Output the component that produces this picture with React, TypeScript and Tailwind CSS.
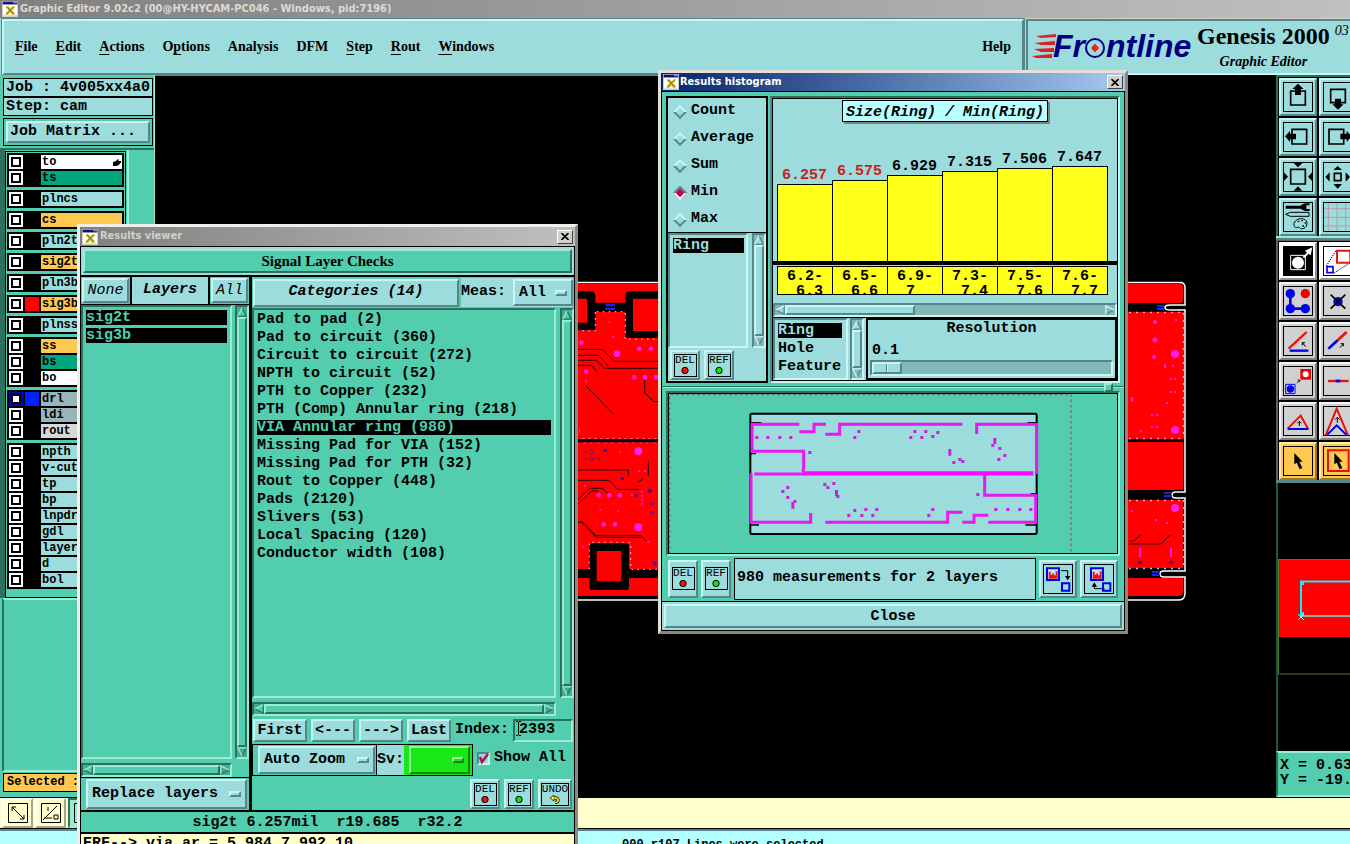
import { useState } from "react";
import type { ReactNode } from "react";
import clsx from "clsx";

// Motif style bevels
const RAISED_AQUA =
  "border-2 border-t-[#c8f6f4] border-l-[#c8f6f4] border-r-[#56868a] border-b-[#56868a] bg-[#9cdcdc]";
const SUNKEN_AQUA =
  "border-2 border-t-[#56868a] border-l-[#56868a] border-r-[#c8f6f4] border-b-[#c8f6f4] bg-[#9cdcdc]";
const RAISED_GREEN =
  "border-2 border-t-[#9cecd4] border-l-[#9cecd4] border-r-[#2c705e] border-b-[#2c705e] bg-[#52ceae]";
const SUNKEN_GREEN =
  "border-2 border-t-[#2c705e] border-l-[#2c705e] border-r-[#9cecd4] border-b-[#9cecd4] bg-[#52ceae]";

interface Layer {
  name: string;
  color: string;
  swatch?: string;
  selected?: boolean;
  work?: boolean;
}

const AQUA = "bg-[#9cdcdc]";
const ORANGE = "bg-[#ffc850]";
const GREEN = "bg-[#00a67c]";
const STEEL = "bg-[#9ab4bc]";

const LAYER_GROUPS: Layer[][] = [
  [{ name: "to", color: "bg-white", work: true }, { name: "ts", color: GREEN }],
  [{ name: "plncs", color: AQUA }],
  [{ name: "cs", color: ORANGE }],
  [{ name: "pln2t", color: AQUA }],
  [{ name: "sig2t", color: ORANGE }],
  [{ name: "pln3b", color: AQUA }],
  [{ name: "sig3b", color: ORANGE, swatch: "bg-[#ff0000]" }],
  [{ name: "plnss", color: AQUA }],
  [{ name: "ss", color: ORANGE }, { name: "bs", color: GREEN }, { name: "bo", color: "bg-white" }],
  [
    { name: "drl", color: STEEL, swatch: "bg-[#0020ff]", selected: true },
    { name: "ldi", color: STEEL },
    { name: "rout", color: "bg-[#d8d8d8]" },
  ],
  ["npth", "v-cut", "tp", "bp", "lnpdr", "gdl", "layer", "d", "bol"].map((name) => ({ name, color: AQUA })),
];

const MENUS = [
  ["", "F", "ile"],
  ["", "E", "dit"],
  ["", "A", "ctions"],
  ["O", "p", "tions"],
  ["Analysis", "", ""],
  ["DFM", "", ""],
  ["", "S", "tep"],
  ["", "R", "out"],
  ["", "W", "indows"],
];

const CATEGORIES = [
  "Pad to pad (2)",
  "Pad to circuit (360)",
  "Circuit to circuit (272)",
  "NPTH to circuit (52)",
  "PTH to Copper (232)",
  "PTH (Comp) Annular ring (218)",
  "VIA Annular ring (980)",
  "Missing Pad for VIA (152)",
  "Missing Pad for PTH (32)",
  "Rout to Copper (448)",
  "Pads (2120)",
  "Slivers (53)",
  "Local Spacing (120)",
  "Conductor width (108)",
];

const BARS = [
  { value: "6.257", height: 77, from: "6.2-", to: "6.3", alert: true },
  { value: "6.575", height: 81, from: "6.5-", to: "6.6", alert: true },
  { value: "6.929", height: 86, from: "6.9-", to: "7", alert: false },
  { value: "7.315", height: 90, from: "7.3-", to: "7.4", alert: false },
  { value: "7.506", height: 93, from: "7.5-", to: "7.6", alert: false },
  { value: "7.647", height: 95, from: "7.6-", to: "7.7", alert: false },
];

function AppIcon() {
  return (
    <svg viewBox="0 0 48 48" className="h-4 w-4 shrink-0" aria-hidden="true">
      <path d="M0 0h48v48H0z" fill="#d4d0c8" />
      <path d="M2 2h44v8H2z" fill="#10107c" />
      <path d="M34 3h4v4h-4zM40 3h4v4h-4z" fill="#d4d0c8" />
      <path d="M3 12h42v31H3z" fill="#fff" />
      <path d="M12 16h8l6 7 6-7h6v4l-8 8 8 8v5h-8l-5-7-7 7h-7v-4l9-9-8-8z" fill="#c8b400" />
      <path d="M15 18l20 20M34 18L14 38" stroke="#6c6410" strokeWidth="2" />
    </svg>
  );
}

function CloseBox() {
  return (
    <button
      aria-label="Close window"
      className="flex h-[14px] w-4 shrink-0 items-center justify-center border border-t-white border-l-white border-r-[#404040] border-b-[#404040] bg-[#d4d0c8]"
    >
      <svg viewBox="0 0 8 7" className="h-[7px] w-2" aria-hidden="true">
        <path d="M.5 0l7 7M7.5 0l-7 7" stroke="#000" strokeWidth="1.6" />
      </svg>
    </button>
  );
}

function Arrow({ dir, aqua }: { dir: "up" | "down" | "left" | "right"; aqua?: boolean }) {
  const light = aqua ? "#d0fafa" : "#9cecd4";
  const dark = aqua ? "#56868a" : "#2c705e";
  const shapes = {
    up: ["M1 11L6 1", "M6 1l5 10H1"],
    down: ["M11 1H1l5 10", "M6 11l5-10"],
    left: ["M11 1L1 6", "M1 6l10 5V1"],
    right: ["M1 11V1l10 5", "M11 6L1 11"],
  };
  return (
    <svg viewBox="0 0 12 12" className="h-[10px] w-[10px] shrink-0" aria-hidden="true">
      <path d="M0 0h12v12H0z" fill={aqua ? "#84b8b8" : "#44ac92"} />
      <path d={shapes[dir][1]} fill={aqua ? "#9cdcdc" : "#52ceae"} stroke={dark} strokeWidth="1.5" />
      <path d={shapes[dir][0]} fill="none" stroke={light} strokeWidth="1.5" />
    </svg>
  );
}

function ScrollBar({
  horizontal,
  aqua,
  thumb = "flex-1",
  className,
}: {
  horizontal?: boolean;
  aqua?: boolean;
  thumb?: string;
  className?: string;
}) {
  return (
    <div
      className={clsx(
        "flex shrink-0",
        horizontal ? "h-[14px]" : "w-[14px] flex-col",
        aqua ? SUNKEN_AQUA : SUNKEN_GREEN,
        className
      )}
    >
      <Arrow dir={horizontal ? "left" : "up"} aqua={aqua} />
      <div className={clsx(aqua ? RAISED_AQUA : RAISED_GREEN, thumb)} />
      {thumb !== "flex-1" && <div className="flex-1 bg-[#84b8b8]" />}
      <Arrow dir={horizontal ? "right" : "down"} aqua={aqua} />
    </div>
  );
}

function OptionMenu({
  label,
  options,
  className,
  green,
}: {
  label: string;
  options: string[];
  className?: string;
  green?: boolean;
}) {
  return (
    <div
      className={clsx(
        "relative flex items-center",
        green
          ? "border-2 border-t-[#98f898] border-l-[#98f898] border-r-[#148414] border-b-[#148414] bg-[#18e818]"
          : RAISED_AQUA,
        className
      )}
    >
      <select aria-label={label} className="h-full w-full appearance-none bg-transparent pt-px pl-1 font-bold outline-none">
        {options.map((o) => (
          <option key={o}>{o}</option>
        ))}
      </select>
      <span
        className={clsx(
          "pointer-events-none absolute right-1 h-[6px] w-3 border-2",
          green
            ? "border-t-[#98f898] border-l-[#98f898] border-r-[#148414] border-b-[#148414]"
            : "border-t-[#c8f6f4] border-l-[#c8f6f4] border-r-[#56868a] border-b-[#56868a]"
        )}
      />
    </div>
  );
}

function MarkButton({ text, dot, className }: { text: string; dot?: string; className?: string }) {
  return (
    <button
      className={clsx(
        RAISED_AQUA,
        "flex shrink-0 items-center justify-center",
        text === "UNDO" ? "w-[34px]" : "w-[30px]",
        className ?? "h-[30px]"
      )}
    >
      <span
        className={clsx(
          "flex h-[23px] flex-col items-center border border-black text-[11px] leading-[11px] font-normal",
          text === "UNDO" ? "w-7" : "w-[23px]"
        )}
      >
        {text}
        <svg viewBox="0 0 10 9" className="h-[9px] w-[10px]" aria-hidden="true">
          {dot ? (
            <circle cx="5" cy="4.5" r="3.2" fill={dot} stroke="#000" />
          ) : (
            <>
              <path d="M3 3h3c3 0 3 4.500-1 4.500" fill="none" stroke="#000" strokeWidth="3" />
              <path d="M0 3l4-3v6z" fill="#ffff00" stroke="#000" strokeWidth=".7" />
              <path d="M3 3h3c3 0 3 4.500-1 4.500" fill="none" stroke="#ffff00" strokeWidth="1.600" />
            </>
          )}
        </svg>
      </span>
    </button>
  );
}

const SMALL_ARROW = "M0 0L10 12M0 0v8M0 0h8";
const CURSOR = "M46 33v34l7-5 9 20 8-4-9-19h10z";

function ToolButton({ label, tone, children }: { label: string; tone: string; children: ReactNode }) {
  return (
    <button aria-label={label} className={clsx("h-[38px] w-[38px] border-2", tone)}>
      <svg viewBox="6 6 102 102" className="h-[34px] w-[34px]" fill="none">
        <rect x="13.500" y="13.500" width="87" height="87" stroke="#000" strokeWidth="3" />
        {children}
      </svg>
    </button>
  );
}

const TOOL_AQUA = "border-t-[#c8f6f4] border-l-[#c8f6f4] border-r-[#56868a] border-b-[#56868a] bg-[#9cdcdc]";
const TOOL_GRAY = "border-t-[#f4f4f4] border-l-[#f4f4f4] border-r-[#808080] border-b-[#808080] bg-[#d0d0d0]";
const TOOL_WHITE = "border-t-white border-l-white border-r-[#909090] border-b-[#909090] bg-white";
const TOOL_ORANGE = "border-t-[#ffe8b0] border-l-[#ffe8b0] border-r-[#a07820] border-b-[#a07820] bg-[#ffc850]";

function ViewTools() {
  return (
    <div className="grid grid-cols-[38px_38px] gap-0.5 bg-black pt-px pl-px">
      <ToolButton label="Pan up" tone={TOOL_AQUA}>
        <path d="M35 39h44v42H35z" stroke="#000" strokeWidth="5" />
        <path d="M57 17l17 16h-8v18H48V33h-8z" fill="#000" />
      </ToolButton>
      <ToolButton label="Pan down" tone={TOOL_AQUA}>
        <path d="M35 34h44v40H35z" stroke="#000" strokeWidth="5" />
        <path d="M57 95l17-16h-8V62H48v17h-8z" fill="#000" />
      </ToolButton>
      <ToolButton label="Pan left" tone={TOOL_AQUA}>
        <path d="M39 34h44v44H39z" stroke="#000" strokeWidth="5" />
        <path d="M18 55l15-16v8h18v17H33v8z" fill="#000" />
      </ToolButton>
      <ToolButton label="Pan right" tone={TOOL_AQUA}>
        <path d="M30 34h44v44H30z" stroke="#000" strokeWidth="5" />
        <path d="M98 55L83 39v8H64v17h19v8z" fill="#000" />
      </ToolButton>
      <ToolButton label="Zoom in" tone={TOOL_AQUA}>
        <path d="M35 34h44v44H35z" stroke="#000" strokeWidth="5" />
        <path d="M44 15h26L57 28zM44 98h26L57 85zM14 42v28l13-14zM100 42v28L87 56z" fill="#000" />
      </ToolButton>
      <ToolButton label="Zoom out" tone={TOOL_AQUA}>
        <path d="M46 46h20v22H46z" stroke="#000" strokeWidth="5" />
        <path d="M43 36h26L56 24zM43 78h26L56 92zM32 43v28L19 57zM80 43v28l13-14z" fill="#000" />
      </ToolButton>
      <ToolButton label="Options" tone={TOOL_AQUA}>
        <path d="M20 23h48v9H20zM66 21l12-5h14v6H82v11h10v6H78l-12-6z" fill="#000" />
        <path d="M20 49l14-6h56v12H34z" stroke="#000" strokeWidth="3" />
        <path d="M46 85c-6-12 8-24 22-23 18 1 20 18 10 27-8 6-14 4-16 0-2-5-12 5-16-4z" stroke="#000" strokeWidth="3" />
        <path d="M56 70h5M67 68h5M77 75h4M70 84h5" stroke="#000" strokeWidth="4" />
      </ToolButton>
      <ToolButton label="Grid" tone={TOOL_AQUA}>
        <path d="M28 15v84M54 15v84M80 15v84M15 32h84M15 58h84M15 84h84" stroke="#b89ca8" strokeWidth="3" />
      </ToolButton>
    </div>
  );
}

function EditTools() {
  return (
    <div className="grid grid-cols-[38px_38px] gap-0.5 bg-black pt-px pl-px">
      <ToolButton label="Invert" tone={TOOL_WHITE}>
        <path d="M12 12h90v90H12z" fill="#000" />
        <path d="M35 40h44v43H35z" stroke="#fff" strokeWidth="3" />
        <circle cx="57" cy="62" r="18" fill="#fff" />
        <path d="M70 46l14-14-6-6 22-10-5 24-6-5-13 13z" fill="#fff" />
      </ToolButton>
      <ToolButton label="Resize" tone={TOOL_WHITE}>
        <path d="M22 72L52 24M44 94l50-32" stroke="#000" strokeWidth="3" strokeDasharray="4 3" />
        <path d="M54 26h40v36H54z" stroke="#e81818" strokeWidth="6" />
        <path d="M24 74h18v18H24z" stroke="#0000f0" strokeWidth="5" />
      </ToolButton>
      <ToolButton label="Copy pads" tone={TOOL_GRAY}>
        <path d="M34 35v45h45" stroke="#0000f0" strokeWidth="8" />
        <g fill="#0000f0">
          <circle cx="34" cy="35" r="14" />
          <circle cx="34" cy="80" r="14" />
          <circle cx="79" cy="80" r="14" />
        </g>
        <circle cx="79" cy="35" r="14" fill="#f00000" />
      </ToolButton>
      <ToolButton label="Delete" tone={TOOL_GRAY}>
        <circle cx="57" cy="59" r="14" fill="#0000e8" />
        <path d="M35 38l44 42M79 38L35 80" stroke="#000" strokeWidth="5" />
      </ToolButton>
      <ToolButton label="Rotate line" tone={TOOL_GRAY}>
        <path d="M29 80l54-50" stroke="#e81010" strokeWidth="7" />
        <path d="M32 86h56" stroke="#0000f0" strokeWidth="7" />
        <path d={SMALL_ARROW} transform="translate(70 62)" stroke="#000" strokeWidth="3" />
      </ToolButton>
      <ToolButton label="Extend line" tone={TOOL_GRAY}>
        <path d="M56 55l27-25" stroke="#e81010" strokeWidth="8" />
        <path d="M28 80l28-25" stroke="#0000f0" strokeWidth="8" />
        <path d={SMALL_ARROW} transform="translate(73 65) scale(-1 1)" stroke="#000" strokeWidth="3" />
      </ToolButton>
      <ToolButton label="Change symbol" tone={TOOL_GRAY}>
        <path d="M20 67h28v28H20z" stroke="#0000f0" strokeWidth="3" />
        <circle cx="34" cy="81" r="11" fill="#0000f0" />
        <path d="M64 21h32v32H64z" fill="#f00000" />
        <circle cx="80" cy="37" r="9" fill="#fff" />
        <path d={SMALL_ARROW} transform="translate(62 54) scale(-.8 .8)" stroke="#000" strokeWidth="3" />
      </ToolButton>
      <ToolButton label="Break line" tone={TOOL_GRAY}>
        <path d="M27 57h62" stroke="#e81010" strokeWidth="7" />
        <path d="M50 57h14" stroke="#0000f0" strokeWidth="8" />
      </ToolButton>
      <ToolButton label="Stretch" tone={TOOL_GRAY}>
        <path d="M26 80l39-39 23 41" stroke="#e81010" strokeWidth="6" />
        <path d="M26 81h62" stroke="#0000f0" strokeWidth="6" />
        <path d="M61 72V58M55 64l6-6 6 6" stroke="#000" strokeWidth="3" />
      </ToolButton>
      <ToolButton label="Move corner" tone={TOOL_GRAY}>
        <path d="M20 100l33-80 34 80" stroke="#e81010" strokeWidth="6" />
        <path d="M25 98l28-28 29 28" stroke="#0000f0" strokeWidth="6" />
        <path d="M55 62V46M48 53l7-7 7 7" stroke="#000" strokeWidth="3" />
      </ToolButton>
      <ToolButton label="Select" tone={TOOL_ORANGE}>
        <path d={CURSOR} fill="#000" />
      </ToolButton>
      <ToolButton label="Select in frame" tone={TOOL_ORANGE}>
        <path d="M27 25h62v62H27z" stroke="#e81010" strokeWidth="6" />
        <path d={CURSOR} fill="#000" />
      </ToolButton>
    </div>
  );
}

function Navigator() {
  return (
    <svg className="min-h-0 w-full flex-1 border-l-2 border-[#1c5848] bg-black" aria-label="Panel overview" role="img">
      <g transform="translate(0 2)">
        <path d="M0 75h80v77H0z" fill="#ff0000" />
        <path d="M.5 74.500H80M.5 74v115H80" fill="none" stroke="#4c7c20" />
        <path d="M24 131h56" stroke="#a8a8a8" strokeWidth="2" />
        <path d="M23 132V96.500h57" fill="none" stroke="#20e8f8" strokeWidth="2" />
        <path d="M22 96h4v4h-4zM22 127h4v4h-4z" fill="#20e8f8" />
        <path d="M20 129l6 6M26 129l-6 6" stroke="#a0f0f8" />
      </g>
    </svg>
  );
}

// Copper layer shown on the work area
function BoardArtwork() {
  return (
    <svg className="absolute inset-0 h-full w-full" role="img" aria-label="Board artwork">
      <g transform="translate(-155 -75)">
        <path d="M400 282.500h780q5 0 5 5V305h-15q-5 0-5 2.500t5 2.500h15v182h-9q-4 0-4 3t4 3h9v73h-21q-4 0-4 3t4 3h21v16q0 7-6 7H400z" fill="#000" stroke="#fff" strokeWidth="1.500" />
        <path d="M400 284h780q3 0 3 3v14q0 2-3 2H400zM400 312h784v127H400zM400 442h783v48H400zM400 500h783v68H400zM400 578h783v13q0 5-5 5H400z" fill="#ff0000" />
        <path d="M1129 312.500h55M1183.500 313v126M1129 438.500h54M1183.500 500v68M1129 500.500h54M1129 568.500h54" stroke="#f0a0c0" strokeDasharray="2 5" fill="none" strokeWidth="1.500" />
        <path d="M1157 305h7v2h-7zM1157 308h7v2h-7zM1164 492h8v2h-8zM1164 495h8v2h-8zM1152 571h8v2h-8zM1152 574h8v2h-8z" fill="#1028e0" />
        <g fill="#ff20e8">
          <circle cx="1175" cy="354" r="4" />
          <circle cx="1175" cy="430" r="4" />
          <circle cx="1175" cy="508" r="4" />
          <circle cx="1155" cy="322" r="2" />
          <circle cx="1155" cy="340" r="2.500" />
          <circle cx="1154" cy="357" r="2" />
          <path d="M1164 364h2v4h-2zM1172 365h2v2h-2zM1170 378h2v2h-2zM1174 378h2v2h-2zM1170 391h2v2h-2zM1174 391h2v2h-2zM1166 402h2v2h-2zM1151 414h2v2h-2zM1156 414h2v2h-2zM1151 426h2v2h-2zM1156 426h2v2h-2zM1140 430h2v2h-2zM1131 397h2v5h-2zM1175 319h2v2h-2zM1131 510h2v2h-2zM1155 519h2v2h-2zM1166 522h2v2h-2zM1139 548h2v9h-2zM1170 548h2v9h-2z" />
        </g>
        <path d="M1129 541h5l6-6M1129 544h32l9-9" fill="none" stroke="#300" />
        <path d="M1138 561h4v3h-4zM1169 561h4v3h-4z" fill="#2020b0" />
      </g>
      <g transform="translate(405 195) scale(.33333)">
        <path d="M50 131h250v95H50zM50 525h250v372H50zM60 42h238v60H60z" fill="#ff0000" />
        <path d="M95 98h115v25H95z" fill="#000" />
        <path d="M50 64h42q14 0 14 14v44h90V78q0-14 14-14h90v140H196v-78h-90v55H50z" fill="#000" />
        <path d="M50 86h31v72H50zM219 86h80v97h-80z" fill="#ff0000" />
        <path d="M50 898h250v26H50z" fill="#000" />
        <path d="M98 820h100q9 0 9 9v121q0 10-9 10H98q-10 0-10-10V829q0-9 10-9z" fill="#000" />
        <path d="M110 843h74v91h-74z" fill="#ff0000" />
        <path d="M137 102h28v7h-28zM137 113h28v7h-28z" fill="#1028f0" />
        <path d="M106 126v56H50M110 125h86v83h104M50 506h250M88 898V817h124v81h88" fill="none" stroke="#e4a0c8" strokeWidth="4" strokeDasharray="5 13" />
        <path d="M50 512h250" stroke="#000" strokeWidth="9" />
        <path d="M50 519h250" stroke="#c060a0" strokeWidth="3" strokeDasharray="5 16" />
        <g fill="none" stroke="#200808" strokeWidth="3">
          <path d="M50 238h78l34 36h136M50 256h66l28 31M50 271h60l24 24h164M50 286h45l18 22M78 348l84 86M254 330v38l28 27h16" />
          <path d="M50 600h155v17M50 631h97l26 27h64M50 692l40-37h35l25 20M50 706l45-43h20M50 757h20l37 40h137l15 18M60 752l48 50h140M265 572v45M234 637l16-12" />
        </g>
        <g fill="#ff20e8">
          <circle cx="171" cy="251" r="10" />
          <circle cx="235" cy="544" r="12" />
          <circle cx="235" cy="772" r="12" />
          {[[64, 218], [78, 305], [238, 236], [273, 236], [223, 322], [255, 322], [288, 322], [116, 676], [148, 676], [179, 676], [131, 763], [165, 763]].map(([x, y]) => (
            <circle key={`${x}-${y}`} cx={x} cy={y} r="7" />
          ))}
          <path d="M145 153h5v5h-5zM156 198h5v5h-5zM76 331h5v5h-5zM177 543h5v5h-5zM72 645h5v5h-5zM118 717h5v5h-5zM172 722h5v5h-5zM213 672h5v5h-5zM244 662h5v6h-5zM244 674h5v6h-5zM244 686h5v6h-5zM244 698h5v6h-5zM235 601h5v5h-5zM252 601h5v5h-5zM262 813h5v5h-5zM66 828h5v5h-5zM57 474h3v14h-3z" />
        </g>
        <g fill="#b02080" stroke="#200">
          <circle cx="75" cy="546" r="3" />
          <circle cx="75" cy="567" r="3" />
          <circle cx="95" cy="546" r="5" />
          <circle cx="95" cy="567" r="5" />
          <circle cx="116" cy="567" r="3" />
        </g>
        <g fill="#2818a8">
          <circle cx="136" cy="541" r="5" />
          <circle cx="187" cy="625" r="5" />
          <circle cx="228" cy="676" r="5" />
          <circle cx="269" cy="662" r="6" />
          <circle cx="276" cy="702" r="5" />
          <circle cx="276" cy="728" r="5" />
          <circle cx="284" cy="880" r="6" />
        </g>
      </g>
    </svg>
  );
}

function FrontlineLogo() {
  return (
    <svg viewBox="0 0 165 46" className="h-[46px] w-[165px] shrink-0" role="img" aria-label="Frontline">
      <path d="M4 13l20-2v3L9 15zM2 20l21-2v4l-14 0zM2 26l20-1v4l-13 0zM0 33l20-2v4H4z" fill="#e02020" />
      <g
        fill="#000080"
        className="font-['Liberation_Sans',Arial,sans-serif] text-[32px] font-bold italic"
      >
        <text x="21" y="34">
          Fr
        </text>
        <text x="74" y="34">
          ntline
        </text>
      </g>
      <circle cx="63" cy="25" r="9" fill="#9cdcdc" stroke="#000080" strokeWidth="2" />
      <path d="M63 20.500l4 4.500-4 4.500-4-4.500z" fill="#f02020" />
    </svg>
  );
}

function LayerRow({ layer }: { layer: Layer }) {
  return (
    <label className="flex h-4 items-center gap-0.5 bg-black px-0.5">
      <input
        type="checkbox"
        className={clsx(
          "h-[14px] w-[14px] shrink-0 appearance-none border-2 bg-white shadow-[inset_0_0_0_2px_#000]",
          layer.selected ? "border-[#0000b8]" : "border-white"
        )}
      />
      <span className={clsx("h-[14px] w-[14px] shrink-0", layer.swatch)} />
      <span className={clsx("flex h-[14px] flex-1 items-center justify-between px-px text-[12px] leading-[14px]", layer.color)}>
        {layer.name}
        {layer.work && (
          <svg viewBox="0 0 8 7" className="h-[7px] w-2" aria-hidden="true">
            <path d="M0 3l3-1 2-2 1 1-1 1h3v2H7l-1 2-3 1H0z" fill="#000" />
          </svg>
        )}
      </span>
    </label>
  );
}

function Sidebar() {
  return (
    <aside className="flex w-[155px] shrink-0 flex-col border-r border-[#9cecd4] bg-[#52ceae]">
      <div className="pt-[3px] pr-px pl-[3px]">
        <div className="h-[19px] border border-black bg-[#9cdcdc] px-0.5 leading-[18px] whitespace-pre">Job : 4v005xx4a0</div>
        <div className="h-[19px] border border-black bg-[#9cdcdc] px-0.5 leading-[18px]">Step: cam</div>
        <div className="mt-0.5 border border-black p-0.5">
          <button className={clsx(RAISED_AQUA, "block h-[22px] w-full px-0.5 text-left leading-[18px] font-bold")}>
            Job Matrix ...
          </button>
        </div>
      </div>
      <div className="mt-0.5 flex border-t-2 border-l-[5px] border-[#2c705e]">
        <div className="mt-px flex w-[121px] flex-col gap-[3px] border border-black bg-[#52ceae] px-px pt-px pb-2">
          {LAYER_GROUPS.map((group) => (
            <div key={group[0].name} className="bg-black py-px">
              {group.map((layer) => (
                <LayerRow key={layer.name} layer={layer} />
              ))}
            </div>
          ))}
        </div>
        <div className="ml-px flex-1 border-l-2 border-[#9cecd4]" />
      </div>
      <div className="mx-0.5 min-h-0 flex-1 border-2 border-t-[#9cecd4] border-l-[#2c705e] border-r-[#9cecd4] border-b-[#9cecd4]" />
      <div className="mt-px mr-px mb-[5px] ml-[3px] h-[19px] border border-black bg-[#ffc850] px-[3px] text-[12px] leading-[17px]">
        Selected : 0
      </div>
    </aside>
  );
}

function ResultsViewer() {
  const [category, setCategory] = useState("VIA Annular ring (980)");
  return (
    <section className="absolute top-[224px] left-[77px] w-[501px] border-3 border-t-[#f0eee8] border-l-[#f0eee8] border-r-[#8c8880] border-b-[#8c8880] bg-[#d4d0c8]">
      <div className="flex h-[19px] items-center gap-0.5 bg-linear-to-r from-[#808080] to-[#c0c0c0] px-0.5">
        <AppIcon />
        <h2 className="flex-1 font-['DejaVu_Sans_Condensed','DejaVu_Sans',sans-serif] text-[11px] text-[#d4d0c8]">
          Results viewer
        </h2>
        <CloseBox />
      </div>
      <div className="border border-black bg-[#52ceae]">
        <div className="border-b-2 border-black bg-[#9cdcdc] p-0.5">
          <div className={clsx(RAISED_GREEN, "h-6 text-center font-['Liberation_Serif',serif] leading-5")}>
            Signal Layer Checks
          </div>
        </div>
        <div className="flex">
          <div className="flex w-[171px] shrink-0 flex-col border-r-3 border-black">
            <div className="flex h-7 border-b border-black bg-black">
              <div className="bg-[#52ceae] p-px">
                <button className={clsx(RAISED_AQUA, "h-full w-[47px] font-normal italic")}>None</button>
              </div>
              <div className="mx-0.5 flex flex-1 items-center justify-center bg-[#9cdcdc] italic">Layers</div>
              <div className="bg-[#52ceae] p-px">
                <button className={clsx(RAISED_AQUA, "h-full w-[37px] font-normal italic")}>All</button>
              </div>
            </div>
            <div className="flex flex-1 gap-[3px]">
              <ul className={clsx(SUNKEN_GREEN, "flex flex-1 flex-col gap-[3px] px-[3px] pt-[3px]")}>
                {["sig2t", "sig3b"].map((name) => (
                  <li key={name}>
                    <button className="block h-[15px] w-full bg-black text-left leading-4 font-bold text-[#52ceae]">
                      {name}
                    </button>
                  </li>
                ))}
              </ul>
              <ScrollBar />
            </div>
            <ScrollBar horizontal className="mt-1 mr-[17px]" />
            <div className="border-t border-b-2 border-black py-px pr-0.5 pl-[5px]">
              <OptionMenu label="Replace layers" options={["Replace layers"]} className="h-[30px]" />
            </div>
          </div>
          <div className="flex min-w-0 flex-1 flex-col">
            <div className="flex h-[31px] items-center gap-0.5 p-px">
              <button className={clsx(RAISED_AQUA, "h-7 w-[206px] font-bold italic")}>Categories (14)</button>
              <div className="flex h-[29px] flex-1 items-center justify-between bg-[#9cdcdc]">
                Meas:
                <OptionMenu label="Measurements" options={["All"]} className="h-[27px] w-[60px]" />
              </div>
            </div>
            <div className="flex h-[390px] gap-1">
              <ul className={clsx(SUNKEN_GREEN, "flex-1 pt-0.5 pr-[3px] pl-[3px]")}>
                {CATEGORIES.map((name) => (
                  <li key={name} className="h-[18px]">
                    <button
                      onClick={() => setCategory(name)}
                      className={clsx(
                        "block h-[15px] w-full text-left leading-[15px] font-bold whitespace-nowrap",
                        name === category && "bg-black text-[#52ceae]"
                      )}
                    >
                      {name}
                    </button>
                  </li>
                ))}
              </ul>
              <ScrollBar />
            </div>
            <ScrollBar horizontal className="mt-1 mr-[18px]" />
            <div className="flex h-7 items-center gap-1 px-px">
              <button className={clsx(RAISED_AQUA, "h-[23px] w-[54px] leading-5 font-bold")}>First</button>
              <button className={clsx(RAISED_AQUA, "h-[23px] w-11 leading-5 font-bold")}>&lt;---</button>
              <button className={clsx(RAISED_AQUA, "h-[23px] w-11 leading-5 font-bold")}>---&gt;</button>
              <button className={clsx(RAISED_AQUA, "h-[23px] w-11 leading-5 font-bold")}>Last</button>
              <label htmlFor="index">Index:</label>
              <div className="relative flex flex-1">
                <input
                  id="index"
                  defaultValue="2393"
                  className={clsx(SUNKEN_GREEN, "h-[23px] w-full min-w-0 px-1 pb-0.5 leading-4 font-bold outline-none")}
                />
                <svg viewBox="0 0 5 15" className="pointer-events-none absolute top-0.5 left-[3px] h-[15px] w-[5px]" aria-hidden="true">
                  <path d="M0 .5h2M3 .5h2M2.500 1v13M0 14.500h2M3 14.500h2" stroke="#000" />
                </svg>
              </div>
            </div>
            <div className="flex">
              <div className="flex border border-black">
                <div className="w-[124px] border-r border-black py-px pr-px pl-[5px]">
                  <OptionMenu label="Zoom mode" options={["Auto Zoom"]} className="h-7" />
                </div>
                <div className="flex w-[27px] items-center bg-[#9cdcdc]">Sv:</div>
                <div className="w-[68px] bg-[#18e818] py-px pr-0.5 pl-[5px]">
                  <OptionMenu label="Severity" options={[""]} className="h-7" green />
                </div>
              </div>
              <label className="flex h-7 items-center gap-1 pl-1">
                <span className="relative flex">
                  <input type="checkbox" defaultChecked className={clsx(SUNKEN_AQUA, "h-[13px] w-[13px] appearance-none")} />
                  <svg viewBox="0 0 13 13" className="pointer-events-none absolute h-[13px] w-[13px]" aria-hidden="true">
                    <path d="M3 5l2 5 6-8" fill="none" stroke="#b8104c" strokeWidth="2.500" />
                  </svg>
                </span>
                Show All
              </label>
            </div>
            <div className="flex h-9 items-start justify-end gap-1 border-b-2 border-black pt-[3px] pr-0.5">
              <MarkButton text="DEL" dot="#f01010" />
              <MarkButton text="REF" dot="#10e010" />
              <MarkButton text="UNDO" />
            </div>
          </div>
        </div>
        <div className="h-[22px] border-b-2 border-black text-center leading-[22px] whitespace-pre">
          sig2t 6.257mil  r19.685  r32.2
        </div>
        <div className="bg-[#ffffce] px-0.5 pt-0.5 pb-1 leading-4">ERF--&gt; via_ar = 5.984 7.992 10</div>
      </div>
    </section>
  );
}

function Preview() {
  return (
    <svg viewBox="41 42 1344 477" className="h-full w-full" role="img" aria-label="Measurement locations">
      <path d="M43 522V44H1247V522" fill="none" stroke="#a0406c" strokeWidth="3" strokeDasharray="9 7" />
      <rect x="285" y="101" width="859" height="361" rx="4" fill="#9cdcdc" stroke="#000" strokeWidth="6" />
      <path d="M285 128h33M1116 128h28M285 221h17M285 435h26M1110 435h34M1126 341h18" stroke="#000" strokeWidth="4" />
      <g fill="none" stroke="#e818f0" strokeWidth="9">
        <path d="M432 133H290v81h155v48l-2 15M432 155h44v-22h36M510 163h43v-30h368M964 162v-29h180v149" />
        <path d="M297 282h155M287 280v147h179v-28M510 427h367v-30h44M921 427h35v-21h43M999 427h142v-81H988v-62" />
      </g>
      <path d="M445 280h689" stroke="#ff08ff" strokeWidth="13" />
      <path
        fill="#c820dc"
        d="M300 168h9v9h-9zM333 168h9v9h-9zM369 168h9v9h-9zM402 168h9v9h-9zM594 168h9v9h-9zM606 150h9v9h-9zM762 168h9v9h-9zM774 150h9v9h-9zM795 168h9v9h-9zM807 150h9v9h-9zM828 165h9v9h-9zM843 153h9v9h-9zM459 213h9v9h-9zM1014 174h9v18h-9zM1008 192h9v9h-9zM1029 201h9v9h-9zM1044 222h9v9h-9zM1026 234h9v9h-9zM879 207h9v20h-9zM891 243h9v9h-9zM909 234h9v9h-9zM918 240h9v9h-9zM393 318h9v9h-9zM378 330h9v9h-9zM393 348h9v9h-9zM414 360h9v9h-9zM408 366h9v20h-9zM504 309h9v9h-9zM513 318h9v9h-9zM531 306h9v9h-9zM539 330h9v18h-9zM543 345h9v9h-9zM576 402h9v9h-9zM594 387h9v9h-9zM615 402h9v9h-9zM627 384h9v9h-9zM648 402h9v9h-9zM660 384h9v9h-9zM816 402h9v9h-9zM828 384h9v9h-9zM963 339h9v9h-9zM1017 384h9v9h-9zM1053 384h9v9h-9zM1089 384h9v9h-9zM1122 384h9v9h-9z"
      />
    </svg>
  );
}

function ChartIcon({ back }: { back?: boolean }) {
  return (
    <svg viewBox="0 0 90 90" className="h-[30px] w-[30px] shrink-0" fill="none" aria-hidden="true">
      <rect x="1.500" y="1.500" width="87" height="87" stroke="#000" strokeWidth="3" />
      <g transform={back ? "translate(9 0)" : undefined}>
        <path d="M12 13h36v35H12z" stroke="#0000e8" strokeWidth="6" fill="#c8e8f8" />
        <path d="M17 44V23h6v9h5v-4h5v6h5V22h6v22z" fill="#f01010" />
      </g>
      {back ? (
        <>
          <path d="M62 74H31V62" stroke="#000" strokeWidth="3" />
          <path d="M23 68l8-13 8 13z" fill="#000" />
        </>
      ) : (
        <>
          <path d="M54 20h20v20" stroke="#000" strokeWidth="3" />
          <path d="M66 36l8 13 8-13z" fill="#000" />
        </>
      )}
      <path d="M57 58h22v22H57z" stroke="#0000e8" strokeWidth="6" />
    </svg>
  );
}

function ResultsHistogram() {
  const [mode, setMode] = useState("Min");
  return (
    <section className="absolute top-[70px] left-[658px] w-[470px] border-3 border-t-[#e4e0d8] border-l-[#e4e0d8] border-r-[#8c8880] border-b-[#8c8880] bg-[#d4d0c8]">
      <div className="flex h-[18px] items-center gap-px bg-linear-to-r from-[#0a246a] to-[#a6caf0] px-0.5">
        <AppIcon />
        <h2 className="flex-1 font-['DejaVu_Sans_Condensed','DejaVu_Sans',sans-serif] text-[11px] text-white">
          Results histogram
        </h2>
        <CloseBox />
      </div>
      <div className="border border-black bg-[#52ceae]">
        <div className="flex h-[291px] gap-0.5 px-1 pt-1">
          <div className="flex w-[102px] shrink-0 flex-col border-2 border-black bg-[#9cdcdc]">
            <fieldset className="h-[135px] border-b border-black">
              {["Count", "Average", "Sum", "Min", "Max"].map((name) => (
                <label key={name} className="flex h-[27px] items-center gap-1.5 pl-[7px]">
                  <input
                    type="radio"
                    name="mode"
                    checked={mode === name}
                    onChange={() => setMode(name)}
                    className="h-[10px] w-[10px] shrink-0 rotate-45 appearance-none border-2 border-t-[#c8f6f4] border-l-[#c8f6f4] border-r-[#56868a] border-b-[#56868a] checked:border-t-[#56868a] checked:border-l-[#56868a] checked:border-r-[#e8ffff] checked:border-b-[#e8ffff] checked:bg-[#c80050]"
                  />
                  {name}
                </label>
              ))}
            </fieldset>
            <div className="flex h-[115px] gap-1">
              <div className={clsx(SUNKEN_AQUA, "flex-1 py-[3px] pr-0.5 pl-[3px]")}>
                <button className="block h-[15px] w-full bg-black text-left leading-4 font-bold text-[#9cdcdc]">Ring</button>
              </div>
              <ScrollBar aqua />
            </div>
            <div className="flex gap-1 pt-0.5 pl-0.5">
              <MarkButton text="DEL" dot="#f01010" />
              <MarkButton text="REF" dot="#10e010" />
            </div>
          </div>
          <div className="flex min-w-0 flex-1 flex-col border-2 border-t-[#2c705e] border-l-[#56868a] border-r-[#c8f6f4] border-b-[#c8f6f4] bg-[#9cdcdc]">
            <div className="flex flex-1 flex-col border border-black pt-px">
              <div className="mx-auto h-[22px] border border-black bg-[#b8ffff] px-[3px] leading-6 italic shadow-[2px_2px_0_#808080]">
                Size(Ring) / Min(Ring)
              </div>
              <div className="flex flex-1 items-end pl-1">
                {BARS.map((bar) => (
                  <div key={bar.value} className="w-[55px] text-center">
                    <div className={clsx("leading-[17px]", bar.alert && "text-[#c82020]")}>{bar.value}</div>
                    <div
                      className="-mr-px border-x border-t border-black bg-[#ffff1c]"
                      style={{ height: bar.height }}
                    />
                  </div>
                ))}
              </div>
              <div className="mb-px h-1 bg-black" />
              <div className="flex h-[29px] pl-1">
                {BARS.map((bar) => (
                  <div key={bar.value} className="w-[55px]">
                    <div className="-mr-px h-[29px] border border-black bg-[#ffff1c] pt-0.5 pl-[9px] leading-[15px] whitespace-pre">
                      {bar.from}
                      {"\n "}
                      {bar.to}
                    </div>
                  </div>
                ))}
              </div>
              <ScrollBar horizontal aqua thumb="w-[130px]" className="mt-2" />
              <div className="flex h-[63px] border-t border-black">
                <ul className={clsx(SUNKEN_AQUA, "w-[75px] shrink-0 pt-[3px] pl-[3px]")}>
                  <li className="h-[15px] w-16 bg-black leading-4 text-[#9cdcdc]">Ring</li>
                  <li className="mt-[3px] leading-[15px]">Hole</li>
                  <li className="mt-[3px] leading-[15px]">Feature</li>
                </ul>
                <ScrollBar aqua className="mx-0.5" />
                <div className="flex min-w-0 flex-1 flex-col border-2 border-black px-0.5">
                  <label htmlFor="resolution" className="text-center leading-[18px]">
                    Resolution
                  </label>
                  <output htmlFor="resolution" className="mt-1 pl-0.5 leading-[18px]">
                    0.1
                  </output>
                  <input
                    id="resolution"
                    type="range"
                    min="0"
                    max="10"
                    step="0.1"
                    defaultValue="0"
                    className="h-4 w-full appearance-none border-2 border-t-[#56868a] border-r-[#c8f6f4] border-b-[#c8f6f4] border-l-[#56868a] bg-[#84b8b8] [&::-webkit-slider-thumb]:h-3 [&::-webkit-slider-thumb]:w-[30px] [&::-webkit-slider-thumb]:appearance-none [&::-webkit-slider-thumb]:border-2 [&::-webkit-slider-thumb]:border-t-[#c8f6f4] [&::-webkit-slider-thumb]:border-r-[#56868a] [&::-webkit-slider-thumb]:border-b-[#56868a] [&::-webkit-slider-thumb]:border-l-[#c8f6f4] [&::-webkit-slider-thumb]:bg-[linear-gradient(90deg,#9cdcdc_12px,#56868a_12px,#56868a_13px,#c8f6f4_13px,#c8f6f4_14px,#9cdcdc_14px)]"
                  />
                </div>
              </div>
            </div>
          </div>
        </div>
        <div className="flex h-2 items-center">
          <div className="h-0.5 flex-1 border-t border-b border-t-[#2c705e] border-b-[#9cecd4]" />
          <div className={clsx(RAISED_GREEN, "h-[9px] w-[9px]")} />
          <div className="h-0.5 w-[11px] border-t border-b border-t-[#2c705e] border-b-[#9cecd4]" />
        </div>
        <div className="px-1">
          <div className={clsx(SUNKEN_GREEN, "h-[165px]")}>
            <div className="h-full border border-black">
              <Preview />
            </div>
          </div>
        </div>
        <div className="flex h-[46px] items-center gap-[3px] border-b border-black px-1.5">
          <MarkButton text="DEL" dot="#f01010" className="h-[38px]" />
          <MarkButton text="REF" dot="#10e010" className="h-[38px]" />
          <div className="flex h-[42px] flex-1 items-center border border-black bg-[#9cdcdc] px-0.5">
            980 measurements for 2 layers
          </div>
          <button aria-label="Send to viewer" className={clsx(RAISED_AQUA, "flex h-[38px] w-[38px] items-center justify-center")}>
            <ChartIcon />
          </button>
          <button aria-label="Get from viewer" className={clsx(RAISED_AQUA, "flex h-[38px] w-[38px] items-center justify-center")}>
            <ChartIcon back />
          </button>
        </div>
        <div className="bg-[#9cdcdc] p-0.5">
          <button className={clsx(RAISED_AQUA, "block h-6 w-full leading-[22px] font-bold")}>Close</button>
        </div>
      </div>
    </section>
  );
}

function CommandBar() {
  const tone =
    "flex h-[30px] w-[31px] shrink-0 items-center justify-center border-2 border-t-white border-l-white border-r-[#a8a888] border-b-[#a8a888] bg-[#ffffce]";
  return (
    <div className="flex h-8 shrink-0 gap-0.5 border-t border-b border-black bg-[#ffffce] pl-0.5">
      <button aria-label="Snap distance" className={tone}>
        <svg viewBox="0 0 20 20" className="h-5 w-5" fill="none" stroke="#000">
          <path d="M.5.5h19v19H.5zM4 4l12 12M4 8V4h4M16 12v4h-4" />
        </svg>
      </button>
      <button aria-label="Snap angle" className={tone}>
        <svg viewBox="0 0 20 20" className="h-5 w-5" fill="none" stroke="#000">
          <path d="M.5.5h19v19H.5zM2 17L16 3M3 15h8M7 4v4M13 12h4v4h-4z" />
        </svg>
      </button>
      <button
        aria-label="Lock"
        className="flex h-[30px] w-[31px] shrink-0 items-center justify-center border-2 border-t-[#2c705e] border-l-[#2c705e] border-r-[#9cecd4] border-b-[#9cecd4] bg-[#9cecd4]"
      >
        <svg viewBox="0 0 20 20" className="h-5 w-5" fill="none" stroke="#000">
          <path d="M.5.5h19v19H.5zM4 9h12v7H4zM7 9V5h6v4" />
        </svg>
      </button>
    </div>
  );
}

export default function App() {
  return (
    <div className="relative flex h-screen flex-col overflow-hidden bg-black font-['Liberation_Mono','Courier_New',monospace] text-[15px] font-bold text-black">
      <header className="flex h-[18px] shrink-0 items-center gap-0.5 bg-linear-to-r from-[#808080] to-[#c0c0c0] pl-0.5">
        <AppIcon />
        <h1 className="font-['DejaVu_Sans_Condensed','DejaVu_Sans',sans-serif] text-[11px] whitespace-nowrap text-[#dedad2]">
          Graphic Editor 9.02c2 (00@HY-HYCAM-PC046 - Windows, pid:7196)
        </h1>
      </header>
      <div className="flex h-[57px] shrink-0 border-t border-[#d4d0c8] bg-[#9cdcdc] font-['Liberation_Serif',serif]">
        <nav className={clsx(RAISED_AQUA, "ml-0.5 flex flex-1 items-center gap-[18px] px-[11px] pb-0.5 text-[14px] outline outline-[#56868a]")}>
          {MENUS.map(([before, key, after]) => (
            <button key={before + key + after} className="font-bold">
              {before}
              <span className="underline decoration-1 underline-offset-3">{key}</span>
              {after}
            </button>
          ))}
          <button className="ml-auto font-bold">Help</button>
        </nav>
        <div className="ml-0.5 flex w-[324px] shrink-0 items-start overflow-hidden border-t-2 border-b-2 border-l-2 border-t-[#56868a] border-b-[#c8f6f4] border-l-[#56868a] pt-0.5 pl-1">
          <FrontlineLogo />
          <div className="shrink-0 text-center">
            <div className="text-[24px] leading-[26px] whitespace-nowrap">Genesis 2000</div>
            <div className="pt-1 text-[14px] leading-[18px] italic">Graphic Editor</div>
          </div>
          <div className="shrink-0 pl-[5px] text-[14px] leading-4 font-normal italic">03</div>
        </div>
      </div>
      <main className="flex min-h-0 flex-1">
        <Sidebar />
        <div className="relative min-w-0 flex-1 overflow-hidden">
          <BoardArtwork />
        </div>
        <aside className="flex w-[74px] shrink-0 flex-col overflow-hidden border-t-2 border-[#2c705e] bg-[#52ceae]">
          <div className="border-l-2 border-[#2c705e]">
            <ViewTools />
          </div>
          <div className="h-[5px] shrink-0 border-t-2 border-b border-t-[#9cecd4] border-b-[#606060] bg-[#56868a]" />
          <div className="border-l-2 border-[#606060]">
            <EditTools />
          </div>
          <div className="h-[3px] shrink-0 bg-[#56868a]" />
          <Navigator />
          <div className="h-[46px] shrink-0 border-2 border-r-0 border-[#9cecd4] border-l-[#2c705e] pt-[5px] pl-0.5 leading-[15px] whitespace-nowrap">
            <div>X = 0.63</div>
            <div>Y = -19.</div>
          </div>
        </aside>
      </main>
      <CommandBar />
      <footer className="h-[15px] shrink-0 overflow-hidden border-t-2 border-[#56868a] bg-[#b4ffff] pt-1.5 pl-[622px] text-[12px] leading-4">
        000 r107 Lines were selected
      </footer>
      <ResultsViewer />
      <ResultsHistogram />
    </div>
  );
}
